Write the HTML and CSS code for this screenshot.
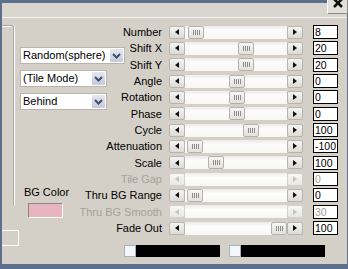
FILE: index.html
```html
<!DOCTYPE html>
<html lang="en">
  <head>
    <meta charset="UTF-8" />
    <title>Tile Settings</title>
    <link rel="stylesheet" href="styles.css">
  </head>
  <body>
    <div class="window">
      <div class="titlebar">
        <div class="close">
          <svg width="20" height="14" viewBox="0 0 20 14">
            <path d="M6 -1 L14 7 M14 -1 L6 7" stroke="#111" stroke-width="2.6" fill="none" />
          </svg>
        </div>
      </div>

      <div class="content">
        <!-- left side: combos and colour -->
        <div class="side">
          <div class="side-frame">
            <div class="groupbox"></div>
            <div class="stub"></div>
          </div>
          <div class="side-controls">
            <div class="combo combo-wide">
              <span class="combo-text">Random(sphere)</span>
              <span class="combo-btn"><svg width="9" height="6" viewBox="0 0 9 6"><path d="M1 1 L4.5 4.5 L8 1" stroke="#3f4f70" stroke-width="2" fill="none" /></svg></span>
            </div>
            <div class="combo">
              <span class="combo-text">(Tile Mode)</span>
              <span class="combo-btn"><svg width="9" height="6" viewBox="0 0 9 6"><path d="M1 1 L4.5 4.5 L8 1" stroke="#3f4f70" stroke-width="2" fill="none" /></svg></span>
            </div>
            <div class="combo">
              <span class="combo-text">Behind</span>
              <span class="combo-btn"><svg width="9" height="6" viewBox="0 0 9 6"><path d="M1 1 L4.5 4.5 L8 1" stroke="#3f4f70" stroke-width="2" fill="none" /></svg></span>
            </div>
            <div class="bg-color">
              <div class="bg-label">BG Color</div>
              <div class="swatch"></div>
            </div>
          </div>
        </div>

        <!-- sliders -->
        <div class="sliders">
          <div class="label">Number</div>
          <div class="slider"><span class="arrow left"></span><span class="track"><span class="thumb" style="margin-left:3px"><i></i></span></span><span class="arrow right"></span></div>
          <div class="value">8</div>

          <div class="label">Shift X</div>
          <div class="slider"><span class="arrow left"></span><span class="track"><span class="thumb" style="margin-left:53px"><i></i></span></span><span class="arrow right"></span></div>
          <div class="value">20</div>

          <div class="label">Shift Y</div>
          <div class="slider"><span class="arrow left"></span><span class="track"><span class="thumb" style="margin-left:53px"><i></i></span></span><span class="arrow right"></span></div>
          <div class="value">20</div>

          <div class="label">Angle</div>
          <div class="slider"><span class="arrow left"></span><span class="track"><span class="thumb" style="margin-left:44px"><i></i></span></span><span class="arrow right"></span></div>
          <div class="value">0</div>

          <div class="label">Rotation</div>
          <div class="slider"><span class="arrow left"></span><span class="track"><span class="thumb" style="margin-left:44px"><i></i></span></span><span class="arrow right"></span></div>
          <div class="value">0</div>

          <div class="label">Phase</div>
          <div class="slider"><span class="arrow left"></span><span class="track"><span class="thumb" style="margin-left:44px"><i></i></span></span><span class="arrow right"></span></div>
          <div class="value">0</div>

          <div class="label">Cycle</div>
          <div class="slider"><span class="arrow left"></span><span class="track"><span class="thumb" style="margin-left:58px"><i></i></span></span><span class="arrow right"></span></div>
          <div class="value">100</div>

          <div class="label">Attenuation</div>
          <div class="slider"><span class="arrow left"></span><span class="track"><span class="thumb" style="margin-left:2px"><i></i></span></span><span class="arrow right"></span></div>
          <div class="value">-100</div>

          <div class="label">Scale</div>
          <div class="slider"><span class="arrow left"></span><span class="track"><span class="thumb" style="margin-left:23px"><i></i></span></span><span class="arrow right"></span></div>
          <div class="value">100</div>

          <div class="label disabled">Tile Gap</div>
          <div class="slider disabled"><span class="arrow left"></span><span class="track"></span><span class="arrow right"></span></div>
          <div class="value disabled">0</div>

          <div class="label">Thru BG Range</div>
          <div class="slider"><span class="arrow left"></span><span class="track"><span class="thumb" style="margin-left:2px"><i></i></span></span><span class="arrow right"></span></div>
          <div class="value">0</div>

          <div class="label disabled">Thru BG Smooth</div>
          <div class="slider disabled"><span class="arrow left"></span><span class="track"></span><span class="arrow right"></span></div>
          <div class="value disabled">30</div>

          <div class="label">Fade Out</div>
          <div class="slider"><span class="arrow left"></span><span class="track"><span class="thumb" style="margin-left:86px"><i></i></span></span><span class="arrow right"></span></div>
          <div class="value">100</div>
        </div>
      </div>

      <!-- gradient bars -->
      <div class="bars">
        <div class="bar"><span class="bar-handle"></span><span class="bar-fill"></span></div>
        <div class="bar"><span class="bar-handle"></span><span class="bar-fill"></span></div>
      </div>
    </div>
  </body>
</html>
```

FILE: styles.css
```css
* {
  margin: 0;
  padding: 0;
  box-sizing: border-box;
  font-family: "Liberation Sans", Arial, sans-serif;
}

body {
  width: 348px;
  height: 269px;
  overflow: hidden;
  background: #5d6f8c;
}

/* Window frame */
.window {
  position: relative;
  width: 348px;
  height: 269px;
  background: #d4d0c8;
  border-top: 3px solid #5d6f8c;
  border-left: 2px solid #5d6f8c;
  border-right: 1px solid #5d6f8c;
  border-bottom: 5px solid #5d6f8c;
  font-size: 11px;
  color: #000;
}

.titlebar {
  height: 15px;
  background: #d9d6d0;
  border-bottom: 1px solid #f6f5f2;
}

.close {
  position: absolute;
  top: -3px;
  right: -1px;
  width: 21px;
  height: 14px;
  background: #e2e0db;
  border-left: 1px solid #fff;
  border-bottom: 1px solid #8e8c86;
  border-right: 1px solid #8e8c86;
  border-bottom-right-radius: 2px;
}

.close svg {
  display: block;
}

/* Main area: side panel and sliders share one cell */
.content {
  display: grid;
  grid-template-columns: 1fr;
  grid-template-rows: minmax(0, 1fr);
  height: 218px;
  padding-top: 6px;
}

.side,
.sliders {
  grid-area: 1 / 1;
}

.side {
  display: flex;
  align-items: flex-start;
}

.side-frame {
  display: flex;
  flex-direction: column;
  width: 17px;
}

.groupbox {
  width: 12px;
  height: 180px;
  margin-top: 1px;
  border-top: 1px solid #a9a69f;
  border-right: 1px solid #a9a69f;
  border-top-right-radius: 3px;
  box-shadow: 1px 0 0 #fff, inset 0 1px 0 #fff;
}

.stub {
  width: 17px;
  height: 16px;
  margin-top: 25px;
  border: 1px solid #fff;
  border-left: none;
}

.side-controls {
  display: flex;
  flex-direction: column;
  margin-left: 1px;
}

/* Combo boxes */
.combo {
  display: flex;
  width: 87px;
  height: 17px;
  margin-top: 6px;
  background: #fff;
  border: 1px solid #b8b5ae;
}

.combo-wide {
  width: 105px;
  margin-top: 23px;
}

.combo-text {
  flex: 1;
  padding-left: 2px;
  line-height: 15px;
  white-space: nowrap;
  overflow: hidden;
}

.combo-btn {
  display: flex;
  align-items: center;
  justify-content: center;
  width: 15px;
  height: 15px;
  background: linear-gradient(#e6e8f0, #c3c9d9);
  border: 1px solid #fff;
  border-radius: 2px;
}

.combo-btn svg {
  display: block;
}

/* BG colour */
.bg-color {
  width: 53px;
  margin-top: 76px;
}

.bg-label {
  text-align: center;
  line-height: 13px;
}

.swatch {
  width: 35px;
  height: 15px;
  margin-top: 4px;
  margin-left: 8px;
  background: #e8b4c0;
  border: 1px solid;
  border-color: #8a8680 #fff #fff #8a8680;
}

/* Slider rows */
.sliders {
  display: grid;
  grid-template-columns: 160px 141px 35px;
  grid-auto-rows: 16.33px;
  align-items: center;
}

.label {
  text-align: right;
  line-height: 16px;
  white-space: nowrap;
}

.label.disabled,
.value.disabled {
  color: #a4a19b;
}

.slider {
  display: flex;
  width: 134px;
  height: 13px;
  margin-left: 7px;
}

.arrow {
  display: flex;
  align-items: center;
  justify-content: center;
  width: 16px;
  height: 13px;
  background: linear-gradient(#f4f4f2, #dcdbd7);
  border: 1px solid #b7b5b0;
  border-radius: 2px;
}

.arrow::before {
  content: "";
  border-top: 3.5px solid transparent;
  border-bottom: 3.5px solid transparent;
}

.arrow.left::before {
  border-right: 4px solid #111;
}

.arrow.right::before {
  border-left: 4px solid #111;
}

.slider.disabled .arrow {
  background: linear-gradient(#f7f7f5, #e8e7e3);
  border-color: #d2d0cb;
}

.slider.disabled .arrow.left::before {
  border-right-color: #c6c4bf;
}

.slider.disabled .arrow.right::before {
  border-left-color: #c6c4bf;
}

.track {
  flex: 1;
  display: flex;
  align-items: center;
  background: linear-gradient(#ecebe8, #fdfdfd 35%, #f6f6f4);
}

.thumb {
  display: flex;
  align-items: center;
  justify-content: center;
  width: 16px;
  height: 13px;
  background: linear-gradient(#f6f6f4, #e2e1dd);
  border: 1px solid #b4b2ad;
  border-radius: 2px;
}

.thumb i {
  width: 7px;
  height: 5px;
  background: repeating-linear-gradient(90deg, #8d8b86 0 1px, transparent 1px 2px);
}

.value {
  width: 25px;
  height: 14px;
  margin-left: 10px;
  padding-left: 1px;
  line-height: 12px;
  background: #fff;
  border: 1px solid #000;
  font-size: 10.5px;
  white-space: nowrap;
  overflow: hidden;
}

/* Bottom gradient bars */
.bars {
  display: flex;
  gap: 9px;
  margin-top: 9px;
  padding-left: 122px;
}

.bar {
  display: flex;
  height: 12px;
}

.bar-handle {
  width: 12px;
  height: 12px;
  background: #f3f7fa;
  border: 1px solid #a7b3be;
}

.bar-fill {
  width: 84px;
  height: 12px;
  background: #000;
}
```
